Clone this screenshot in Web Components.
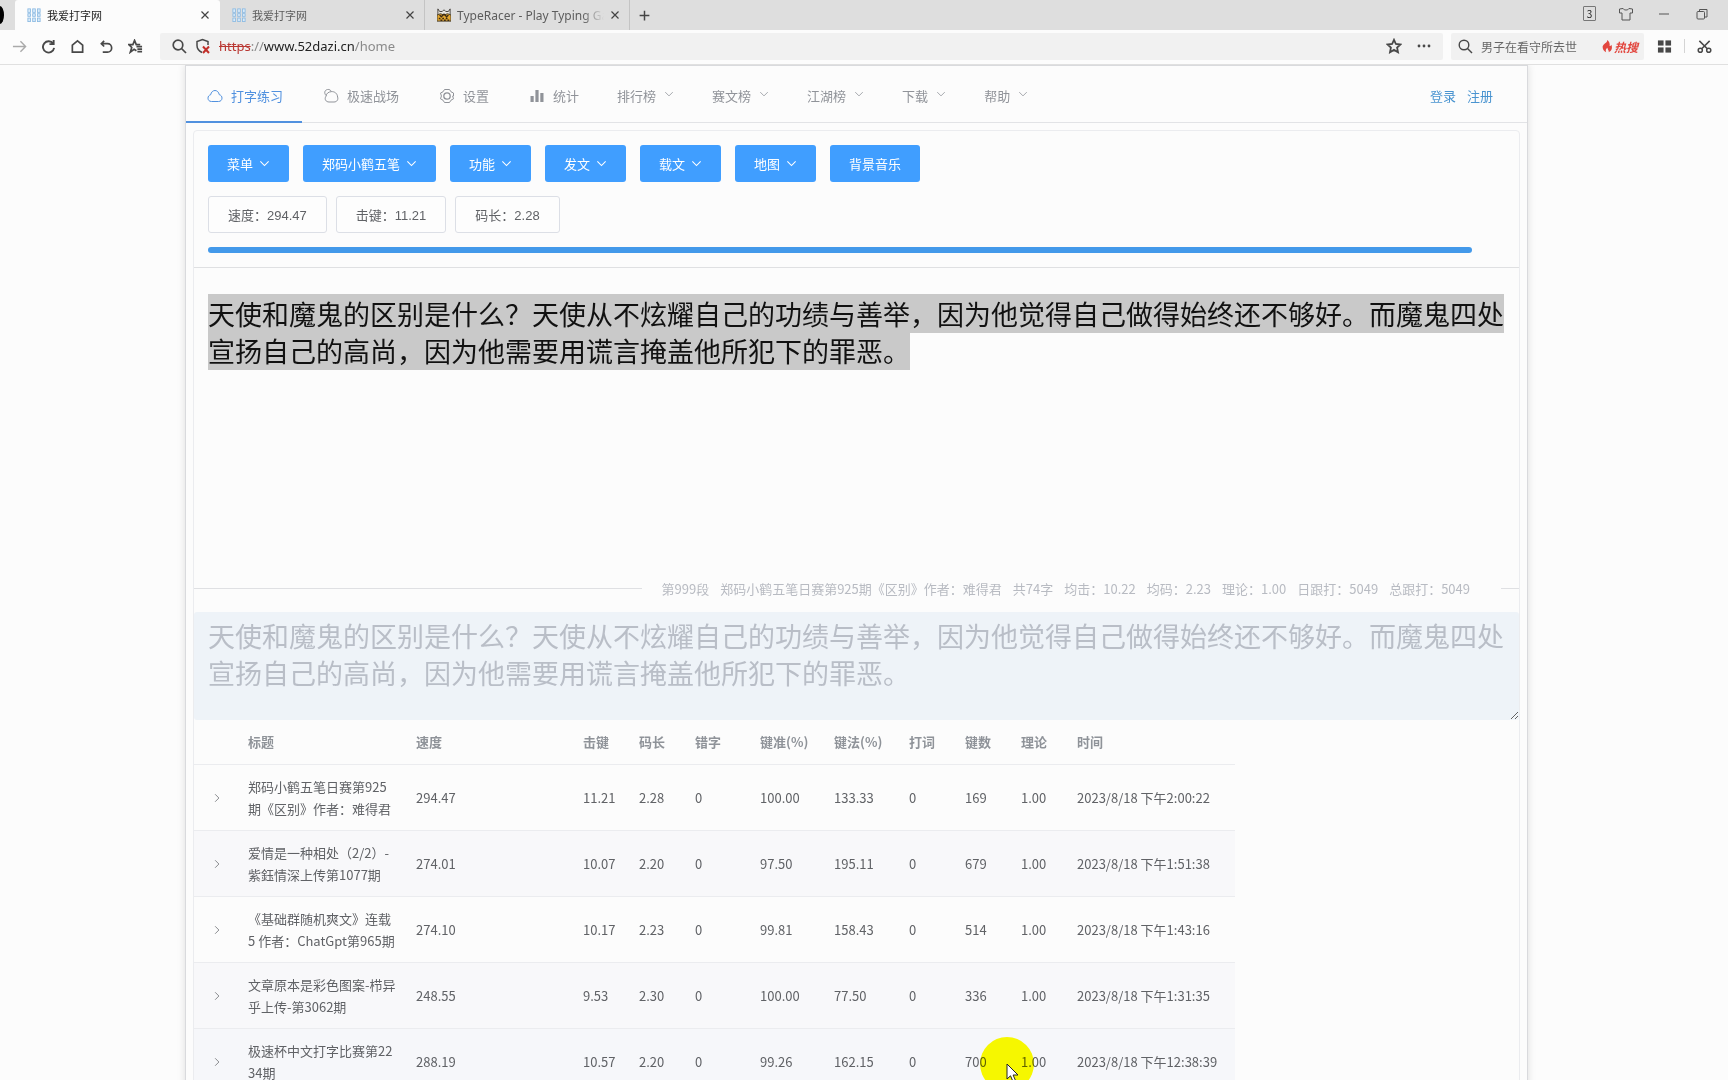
<!DOCTYPE html>
<html lang="zh-CN">
<head>
<meta charset="utf-8">
<title>我爱打字网</title>
<style>
  html, body { margin: 0; height: 100%; }
  body { overflow: hidden; background: #fcfcfc; font-family: "Noto Sans CJK SC", "Noto Sans", sans-serif; font-size: 13px; color: #606266; }
</style>
</head>
<body>
<typing-app></typing-app>
<script>
const ICONS = {
  sites: '<g fill="#d9ebfa" stroke="#8dbbe2"><rect x="1" y="1" width="3" height="4"/><rect x="6.500" y="1" width="3" height="4"/><rect x="12" y="1" width="3" height="4"/><rect x="1" y="6.500" width="3" height="3"/><rect x="6.500" y="6.500" width="3" height="3"/><rect x="12" y="6.500" width="3" height="3"/><rect x="1" y="11.500" width="3" height="4"/><rect x="6.500" y="11.500" width="3" height="4"/><rect x="12" y="11.500" width="3" height="4"/></g>',
  racer: '<path d="M1 1l2 3h3l2-2 2 2h3l2-3v7H1z" fill="#e9e6df" stroke="#3c3833"/><path d="M0 8q4-3 8 0 4-3 8 0v7H0z" fill="#e3a72e" stroke="#3c3833"/><path d="M3 8l2 2 3-3 3 3 2-2M2 12h2M6 12h2M10 12h2M4 14h2M8 14h2M12 14h2" stroke="#3c2a12" stroke-width="1.500" fill="none"/>',
  close: '<path d="M4 4l8 8M12 4l-8 8"/>',
  plus: '<path d="M8 2v12M2 8h12" stroke-width="1.800"/>',
  forward: '<path d="M1 8h13M9 2.500L14.500 8 9 13.500"/>',
  reload: '<path d="M13 5A6 6 0 1 0 14 9.500M13.500 1v4.500H9"/>',
  home: '<path d="M2.500 14V6.500L8 2l5.500 4.500V14z"/>',
  undo: '<path d="M5.500 2L2.500 5l3 3M2.500 5H9a4.500 4.500 0 0 1 0 9H4"/>',
  favs: '<path d="M9 12.500L6.500 11l-4 3 1.500-5L1 6h4.200L7 1.500 8.800 6H13"/><path d="M9 8.200h6M10 10.800h5M10 13.400h5"/>',
  search: '<circle cx="7" cy="7" r="4.800"/><path d="M10.500 10.500L15 15"/>',
  shield: '<path d="M7 14.500C4 13 2 11 2 7.500V3.500L7.500 1.500 13 3.500V7"/><path d="M8 8.500l6 6.500M14 8.500l-6 6.500" stroke="#c22f2a" stroke-width="2"/>',
  star: '<path d="M8 1.800l1.900 4.200 4.600.5-3.400 3.100.9 4.600L8 11.900l-4 2.300.9-4.600L1.500 6.500l4.600-.5z"/>',
  dots: '<g fill="currentColor" stroke="none"><circle cx="3" cy="8" r="1.400"/><circle cx="8" cy="8" r="1.400"/><circle cx="13" cy="8" r="1.400"/></g>',
  flame: '<path d="M8 1c1 3-4 4-5 7.500-.3 3 1.500 5.500 4 6.500-1-2 0-4 1.500-5 0 2 2 3 1.500 5 3.500-1.500 4.500-5 3-8.500-.5 1-1 1.500-2 1.500C11.500 5 10.500 2 8 1z" fill="#e2463e" stroke="none"/>',
  grid: '<g fill="currentColor" stroke="none"><rect x="1" y="1.500" width="6" height="5.500"/><rect x="9" y="1.500" width="6" height="5.500"/><rect x="1" y="9" width="6" height="5.500"/><rect x="9" y="9" width="6" height="5.500"/></g>',
  scissors: '<circle cx="3.500" cy="12" r="2.200"/><circle cx="12.500" cy="12" r="2.200"/><path d="M5 10.500L13.500 2M11 10.500L2.500 2"/>',
  shirt: '<path d="M5 2.500L1.500 3v4H4v7h8V7h2.500V3L11 2.500C10 4.500 6 4.500 5 2.500z"/>',
  minimize: '<path d="M3 8h10"/>',
  restore: '<rect x="3" y="5.500" width="7.500" height="7.500" rx="1"/><path d="M5.500 5V3.500h7.500v7.500h-2"/>',
  cloud: '<path d="M4.500 13.500C2 13.500 1 11.800 1 10.200c0-1.800 1-3 2.600-3.400C4.200 4 6 2.500 8 2.500s3.700 1.500 4.300 4.200c1.700.4 2.700 1.700 2.700 3.400 0 1.800-1.300 3.400-3.500 3.400z"/>',
  heap: '<path d="M3.200 7.500C.8 5.500 1.500 2 4.500 1.500c1.900-.3 3.200.6 3.900 2.100M8.500 3.600C5.500 4 3.500 5 3 8.200c-2 3 0 5.800 3 5.800h5c3 0 4.500-2.500 3.600-5-.2-3.500-3-5.600-6.100-5.400z"/>',
  gear: '<path d="M5.500 1.500h5L12 3.800l2.500 1.200v3l-.9 0 .9 2.800-2.500 1.400-1.500 2.300h-5L4 12.200 1.500 10.800 2.400 8 1.500 5 4 3.800z"/><circle cx="8" cy="8" r="3.200" stroke-width="1.300"/>',
  bars: '<g fill="currentColor" stroke="none"><rect x="1.500" y="8" width="3.200" height="6"/><rect x="6.400" y="2" width="3.200" height="12"/><rect x="11.300" y="5" width="3.200" height="9"/></g>',
  down: '<path d="M2 5l6 6 6-6"/>',
  right: '<path d="M5 2l6 6-6 6"/>'
};

class Base extends HTMLElement {
  constructor() { super(); this.attachShadow({ mode: 'open' }); }
  connectedCallback() { this.shadowRoot.innerHTML = this.render(); }
  attr(n) { return this.getAttribute(n) || ''; }
}
const RESET = `<style>
  * { box-sizing: border-box; }
  button { font: inherit; color: inherit; background: none; border: 0; padding: 0; margin: 0; display: flex; align-items: center; }
  a { color: inherit; text-decoration: none; }
</style>`;

customElements.define('ui-icon', class extends Base {
  render() {
    return `<style>:host{display:block;flex:none;width:16px;height:16px}svg{display:block;width:100%;height:100%}</style>
    <svg viewBox="0 0 16 16" fill="none" stroke="currentColor" stroke-width="${this.attr('weight') || 1}" aria-hidden="true">${ICONS[this.attr('name')]}</svg>`;
  }
});

customElements.define('browser-tab', class extends Base {
  render() {
    return RESET + `<style>
      :host { display: flex; align-items: center; width: 205px; height: 30px; padding: 0 7px 0 12px; box-sizing: border-box; color: #5c5c5c; font-size: 11px; border-right: 1px solid transparent; }
      :host([active]) { background: #fcfcfc; color: #222; border-radius: 3px 3px 0 0; }
      :host([divided]) { border-right-color: #c4c4c4; }
      .site { width: 14px; height: 14px; margin-right: 6px; }
      .name { flex: 1; min-width: 0; overflow: hidden; white-space: nowrap; text-align: left; }
      :host([fade]) .name { -webkit-mask-image: linear-gradient(90deg, #000 85%, transparent); mask-image: linear-gradient(90deg, #000 85%, transparent); margin-right: 4px; font: 12px "Noto Sans", sans-serif; }
      .close ui-icon { width: 14px; height: 14px; color: #444; }
    </style>
    <ui-icon class="site" name="${this.attr('icon')}"></ui-icon>
    <button class="name" role="tab"><slot></slot></button>
    <button class="close" aria-label="关闭"><ui-icon name="close" weight="1.4"></ui-icon></button>`;
  }
});

customElements.define('browser-tabs', class extends Base {
  render() {
    return RESET + `<style>
      :host { display: flex; align-items: center; height: 30px; background: #dedede; overflow: hidden; }
      .avatar { width: 4px; height: 18px; border-radius: 0 4px 4px 0 / 0 9px 9px 0; background: #000; margin-right: 11px; }
      .plus { margin-left: 8px; color: #444; }
      .plus ui-icon { width: 13px; height: 13px; }
      .window { margin-left: auto; display: flex; align-items: center; gap: 22px; height: 27px; align-self: flex-start; padding-right: 18px; color: #555; }
      .count { width: 13px; height: 15px; border: 1px solid #777; border-radius: 1px; justify-content: center; font-size: 10px; line-height: 13px; color: #222; }
    </style>
    <span class="avatar"></span>
    <browser-tab active icon="sites">我爱打字网</browser-tab>
    <browser-tab divided icon="sites">我爱打字网</browser-tab>
    <browser-tab divided fade icon="racer">TypeRacer - Play Typing Games</browser-tab>
    <button class="plus" aria-label="新标签页"><ui-icon name="plus"></ui-icon></button>
    <div class="window">
      <button class="count">3</button>
      <button aria-label="皮肤"><ui-icon name="shirt"></ui-icon></button>
      <button aria-label="最小化"><ui-icon name="minimize"></ui-icon></button>
      <button aria-label="还原"><ui-icon name="restore"></ui-icon></button>
    </div>`;
  }
});

customElements.define('browser-toolbar', class extends Base {
  render() {
    return RESET + `<style>
      :host { display: flex; align-items: center; height: 35px; padding: 0 16px 2px 12px; box-sizing: border-box; border-bottom: 1px solid #e0e0e0; background: #fcfcfc; color: #484848; }
      .keys { display: flex; gap: 14px; width: 148px; }
      .keys ui-icon { width: 15px; height: 15px; }
      .keys button:first-child { color: #aaa; }
      .box { display: flex; align-items: center; height: 27px; background: #f1f1f1; border-radius: 2px; }
      .address { flex: 1; padding: 0 11px; gap: 8px; }
      .url { font: 13px "Noto Sans", sans-serif; color: #8a8a8a; flex: 1; }
      .url s { color: #b93732; } .url b { font-weight: 400; color: #222; }
      .address > button + button { margin-left: 6px; }
      .search { width: 193px; margin-left: 8px; padding: 0 6px; gap: 8px; }
      .search input { flex: 1; min-width: 0; border: 0; padding: 0; background: none; font: inherit; font-size: 12px; color: #666; outline: 0; }
      .hot { color: #e2463e; font-size: 12px; font-style: italic; font-weight: 700; }
      .hot ui-icon { width: 14px; height: 14px; }
      .extras { display: flex; align-items: center; gap: 12px; margin-left: 13px; }
      .extras ui-icon { width: 15px; height: 15px; }
      .extras i { width: 1px; height: 14px; background: #d4d4d4; }
    </style>
    <div class="keys">
      <button aria-label="前进"><ui-icon name="forward" weight="1.5"></ui-icon></button>
      <button aria-label="刷新"><ui-icon name="reload" weight="2"></ui-icon></button>
      <button aria-label="主页"><ui-icon name="home" weight="1.8"></ui-icon></button>
      <button aria-label="恢复"><ui-icon name="undo" weight="1.8"></ui-icon></button>
      <button aria-label="收藏"><ui-icon name="favs" weight="1.8"></ui-icon></button>
    </div>
    <div class="box address">
      <ui-icon name="search" weight="1.7"></ui-icon>
      <ui-icon name="shield" weight="1.5"></ui-icon>
      <a class="url" href="#home"><s>https</s>://<b>www.52dazi.cn</b>/home</a>
      <button aria-label="加入收藏"><ui-icon name="star" weight="1.8"></ui-icon></button>
      <button aria-label="更多"><ui-icon name="dots"></ui-icon></button>
    </div>
    <div class="box search">
      <ui-icon name="search" weight="1.4"></ui-icon>
      <input aria-label="搜索" value="男子在看守所去世">
      <button class="hot"><ui-icon name="flame"></ui-icon>热搜</button>
    </div>
    <div class="extras">
      <button aria-label="应用"><ui-icon name="grid"></ui-icon></button><i></i>
      <button aria-label="截图"><ui-icon name="scissors" weight="1.6"></ui-icon></button>
    </div>`;
  }
});

customElements.define('nav-item', class extends Base {
  render() {
    const icon = this.attr('icon');
    return RESET + `<style>
      :host { display: flex; }
      a { display: flex; align-items: center; padding: 4px 19px 0; border-bottom: 2px solid transparent; color: #909399; height: 57px; }
      :host([active]) a { color: #5191df; border-color: #5191df; }
      .lead { margin: 0 8px 0 2px; width: 16px; height: 16px; }
      .drop { width: 10px; height: 10px; margin: 0 0 4px 8px; color: #a6a9ae; }
    </style>
    <a href="#">${icon ? `<ui-icon class="lead" name="${icon}"></ui-icon>` : ''}<slot></slot>${this.hasAttribute('menu') ? '<ui-icon class="drop" name="down" weight="1.6"></ui-icon>' : ''}</a>`;
  }
});

customElements.define('site-nav', class extends Base {
  render() {
    return RESET + `<style>
      :host { display: flex; height: 57px; border-bottom: 1px solid #e2e3e6; box-sizing: border-box; }
      .account { margin-left: auto; display: flex; align-items: center; gap: 11px; padding: 2px 34px 0 0; color: #4a94d0; }
    </style>
    <nav-item active icon="cloud">打字练习</nav-item><nav-item icon="heap">极速战场</nav-item>
    <nav-item icon="gear">设置</nav-item><nav-item icon="bars">统计</nav-item>
    <nav-item menu>排行榜</nav-item><nav-item menu>赛文榜</nav-item><nav-item menu>江湖榜</nav-item>
    <nav-item menu>下载</nav-item><nav-item menu>帮助</nav-item>
    <div class="account"><a href="#login">登录</a><a href="#register">注册</a></div>`;
  }
});

customElements.define('action-button', class extends Base {
  render() {
    return RESET + `<style>
      :host { display: block; }
      button { height: 37px; padding: 0 19px; border-radius: 3px; background: #409eff; color: #fff; white-space: nowrap; }
      :host([plain]) button { background: #fdfdfd; border: 1px solid #dcdfe6; color: #606266; font: 13px "Liberation Sans", "Noto Sans CJK SC", sans-serif; }
      ui-icon { width: 11px; height: 11px; margin-left: 6px; }
    </style>
    <button><slot></slot>${this.hasAttribute('menu') ? '<ui-icon name="down" weight="1.6"></ui-icon>' : ''}</button>`;
  }
});

const PASSAGE = '天使和魔鬼的区别是什么？天使从不炫耀自己的功绩与善举，因为他觉得自己做得始终还不够好。而魔鬼四处宣扬自己的高尚，因为他需要用谎言掩盖他所犯下的罪恶。';
customElements.define('typing-board', class extends Base {
  render() {
    return RESET + `<style>
      :host { display: block; }
      .tools { padding: 14px; display: flex; flex-direction: column; gap: 14px; border-bottom: 1px solid #dfe0e2; }
      .row { display: flex; gap: 14px; } .stats { gap: 9px; }
      .bar { height: 6px; margin-right: 33px; border-radius: 3px; background: #4399ea; }
      .passage { min-height: 310px; padding: 27px 12px 0 14px; font-size: 27px; line-height: 37px; color: #111; }
      mark { background: #c9c9c9; color: inherit; }
      .info { display: flex; align-items: center; gap: 19px; height: 20px; margin-bottom: 14px; color: #b8bbc2; white-space: nowrap; }
      .info::before, .info::after { content: ""; height: 1px; background: #dfe0e3; flex: 1; }
      .info::after { flex: none; width: 18px; margin-left: 12px; }
      .info p { display: flex; gap: 11px; margin: 0; }
      textarea { display: block; width: 100%; height: 108px; margin: 0; padding: 5px 12px 0 14px; border: 0; border-radius: 3px; outline: 0; background: #eef3f8; color: #b9bec7; font: inherit; font-size: 27px; line-height: 37px; overflow: hidden; resize: vertical; }
    </style>
    <div class="tools">
      <div class="row"><action-button menu>菜单</action-button><action-button menu>郑码小鹤五笔</action-button><action-button menu>功能</action-button><action-button menu>发文</action-button><action-button menu>载文</action-button><action-button menu>地图</action-button><action-button>背景音乐</action-button></div>
      <div class="row stats"><action-button plain>速度：294.47</action-button><action-button plain>击键：11.21</action-button><action-button plain>码长：2.28</action-button></div>
      <div class="bar" role="progressbar" aria-label="进度" aria-valuenow="100"></div>
    </div>
    <div class="passage"><mark>${PASSAGE}</mark></div>
    <div class="info"><p><span>第999段</span><span>郑码小鹤五笔日赛第925期《区别》作者：难得君</span><span>共74字</span><span>均击：10.22</span><span>均码：2.23</span><span>理论：1.00</span><span>日跟打：5049</span><span>总跟打：5049</span></p></div>
    <textarea aria-label="跟打区" readonly>${PASSAGE}</textarea>`;
  }
});

customElements.define('score-table', class extends Base {
  render() {
    const widths = [44, 168, 167, 56, 56, 65, 74, 75, 56, 56, 56, 168];
    const heads = ['', '标题', '速度', '击键', '码长', '错字', '键准(%)', '键法(%)', '打词', '键数', '理论', '时间'];
    const rows = [
      ['郑码小鹤五笔日赛第925期《区别》作者：难得君', '294.47', '11.21', '2.28', '0', '100.00', '133.33', '0', '169', '1.00', '2023/8/18 下午2:00:22'],
      ['爱情是一种相处（2/2）-紫鈺情深上传第1077期', '274.01', '10.07', '2.20', '0', '97.50', '195.11', '0', '679', '1.00', '2023/8/18 下午1:51:38'],
      ['《基础群随机爽文》连载5 作者：ChatGpt第965期', '274.10', '10.17', '2.23', '0', '99.81', '158.43', '0', '514', '1.00', '2023/8/18 下午1:43:16'],
      ['文章原本是彩色图案-栉异乎上传-第3062期', '248.55', '9.53', '2.30', '0', '100.00', '77.50', '0', '336', '1.00', '2023/8/18 下午1:31:35'],
      ['极速杯中文打字比赛第2234期', '288.19', '10.57', '2.20', '0', '99.26', '162.15', '0', '700', '1.00', '2023/8/18 下午12:38:39']
    ];
    return RESET + `<style>
      :host { display: block; }
      table { table-layout: fixed; width: 1041px; border-collapse: separate; border-spacing: 0; line-height: 22px; }
      th, td { padding: 0 10px; text-align: left; border-bottom: 1px solid #ebecef; word-break: break-all; }
      th { height: 45px; color: #8f9399; font-weight: 700; white-space: nowrap; }
      td { height: 66px; color: #606266; }
      tbody tr:nth-child(even) td { background: #f8f8fa; }
      tbody tr:last-child td { background: #f6f7fa; }
      td button { margin-left: 8px; } td ui-icon { width: 10px; height: 10px; color: #808285; }
    </style>
    <table><colgroup>${widths.map(w => `<col style="width:${w}px">`).join('')}</colgroup>
      <thead><tr>${heads.map(h => `<th scope="col">${h}</th>`).join('')}</tr></thead>
      <tbody>${rows.map(r => `<tr><td><button aria-label="展开"><ui-icon name="right" weight="1.5"></ui-icon></button></td>${r.map(c => `<td>${c}</td>`).join('')}</tr>`).join('')}</tbody>
    </table>`;
  }
});

customElements.define('pointer-spot', class extends Base {
  render() {
    return `<style>
      :host { position: absolute; left: 980px; top: 1037px; width: 54px; height: 54px; pointer-events: none; mix-blend-mode: multiply; border-radius: 50%; background: #ffff00; }
    </style>`;
  }
});
customElements.define('pointer-arrow', class extends Base {
  render() {
    return `<style>:host { position: absolute; left: 1006px; top: 1063px; pointer-events: none; } svg { display: block; }</style>
    <svg width="14" height="20" viewBox="0 0 14 20" aria-hidden="true"><path d="M1 1v15l3.500-3.200L7 18.500l2.500-1-2.400-5.500H12z" fill="#fff" stroke="#222"/></svg>`;
  }
});

customElements.define('typing-app', class extends Base {
  render() {
    return `<style>
      :host { display: flex; flex-direction: column; height: 100vh; overflow: hidden; position: relative; }
      browser-tabs, browser-toolbar { flex: none; }
      main { flex: 1; min-height: 0; overflow: hidden; padding-right: 15px; }
      .card { box-sizing: border-box; max-width: 1343px; margin: 0 auto; border: 1px solid #d9dadd; background: #fcfcfc; box-shadow: 0 0 8px rgba(0,0,0,.12); }
      .panel { margin: 7px; border: 1px solid #ebecef; border-radius: 4px; }
    </style>
    <browser-tabs></browser-tabs>
    <browser-toolbar></browser-toolbar>
    <main><div class="card"><site-nav></site-nav>
      <div class="panel"><typing-board></typing-board><score-table></score-table></div>
    </div></main>
    <pointer-spot></pointer-spot><pointer-arrow></pointer-arrow>`;
  }
});
</script>
</body>
</html>
